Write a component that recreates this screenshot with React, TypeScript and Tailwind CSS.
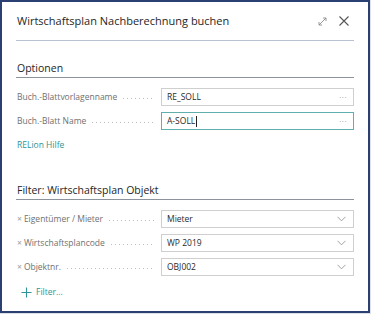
import React from "react";

const font = { fontFamily: '"Open Sans", "Noto Sans", sans-serif' };

function Dots() {
  return (
    <span className="flex-1 mx-[6px] mt-[3px] h-[1px] bg-[repeating-linear-gradient(to_right,#bdbdbd_0_1px,transparent_1px_4px)]" />
  );
}

function Row({
  label,
  value,
  filter,
  kind,
  active,
}: {
  label: string;
  value: string;
  filter?: boolean;
  kind: "dots" | "chev";
  active?: boolean;
}) {
  return (
    <div className="flex items-center h-[18px]">
      <div className="w-[144px] h-[18px] flex items-center pl-[1px] text-[8.5px] leading-[12px] text-[#707070] whitespace-nowrap">
        {filter && <span className="text-[8.5px] text-[#9a9a9a] mr-[2px]">×</span>}
        <span>{label}</span>
        <Dots />
      </div>
      <div
        className={`ml-[1px] w-[193px] h-[18px] flex items-center justify-between pl-[5px] pr-[6px] bg-white border ${
          active ? "border-[#5fb0ac]" : "border-[#cfcfcf]"
        }`}
      >
        <span className="text-[8.5px] leading-[12px] text-[#2a2a2a] flex items-center">
          {value}
          {active && <span className="inline-block w-[1px] h-[11px] bg-[#222] ml-[1px]" />}
        </span>
        {kind === "dots" ? (
          <span className="text-[8px] leading-[10px] text-[#8a8a8a] tracking-[0.5px]">···</span>
        ) : (
          <svg width="9" height="6" viewBox="0 0 9 6" className="mr-[1px]">
            <path d="M0.5 0.8 L4.5 4.8 L8.5 0.8" fill="none" stroke="#8a8a8a" strokeWidth="0.8" />
          </svg>
        )}
      </div>
    </div>
  );
}

export default function App() {
  return (
    <div className="w-[371px] h-[314px] bg-[#dde2ea]" style={font}>
      <div className="w-[370px] h-[313px] border-2 border-[#2a3f72] bg-white flex flex-col px-[14px]">
        <div className="h-[39px] flex items-center justify-between border-b border-[#b9c2d2] shrink-0">
          <span className="text-[11px] text-[#262626] pl-[1px]">Wirtschaftsplan Nachberechnung buchen</span>
          <div className="flex items-center gap-[12px] pr-[5px]">
            <svg width="9" height="9" viewBox="0 0 9 9">
              <path d="M1 8 L8 1 M5 1 H8 V4 M1 5 V8 H4" fill="none" stroke="#8c8c8c" strokeWidth="0.9" />
            </svg>
            <svg width="10" height="10" viewBox="0 0 10 10">
              <path d="M0.5 0.5 L9.5 9.5 M9.5 0.5 L0.5 9.5" fill="none" stroke="#555" strokeWidth="1.1" />
            </svg>
          </div>
        </div>

        <div className="mt-[20px] h-[17px] border-b border-[#8d939c] text-[10.5px] leading-[15px] text-[#262626] font-medium pl-[1px] shrink-0">
          Optionen
        </div>

        <div className="mt-[10px] flex flex-col gap-[6px]">
          <Row label="Buch.-Blattvorlagenname" value="RE_SOLL" kind="dots" />
          <Row label="Buch.-Blatt Name" value="A-SOLL" kind="dots" active />
        </div>

        <div className="mt-[8px] h-[14px] leading-[14px] text-[8.5px] text-[#2f9495] pl-[1px]">RELion Hilfe</div>

        <div className="mt-[31px] h-[17px] border-b border-[#8d939c] text-[10.5px] leading-[15px] text-[#262626] font-medium pl-[1px] shrink-0">
          Filter: Wirtschaftsplan Objekt
        </div>

        <div className="mt-[10px] flex flex-col gap-[6px]">
          <Row label="Eigentümer / Mieter" value="Mieter" kind="chev" filter />
          <Row label="Wirtschaftsplancode" value="WP 2019" kind="chev" filter />
          <Row label="Objektnr." value="OBJ002" kind="chev" filter />
        </div>

        <div className="mt-[9px] h-[14px] flex items-center gap-[4px] pl-[5px]">
          <svg width="11" height="11" viewBox="0 0 11 11">
            <path d="M5.5 0.5 V10.5 M0.5 5.5 H10.5" fill="none" stroke="#2f9495" strokeWidth="1.1" />
          </svg>
          <span className="text-[8.5px] leading-[12px] text-[#2f9495]">Filter...</span>
        </div>
      </div>
    </div>
  );
}
